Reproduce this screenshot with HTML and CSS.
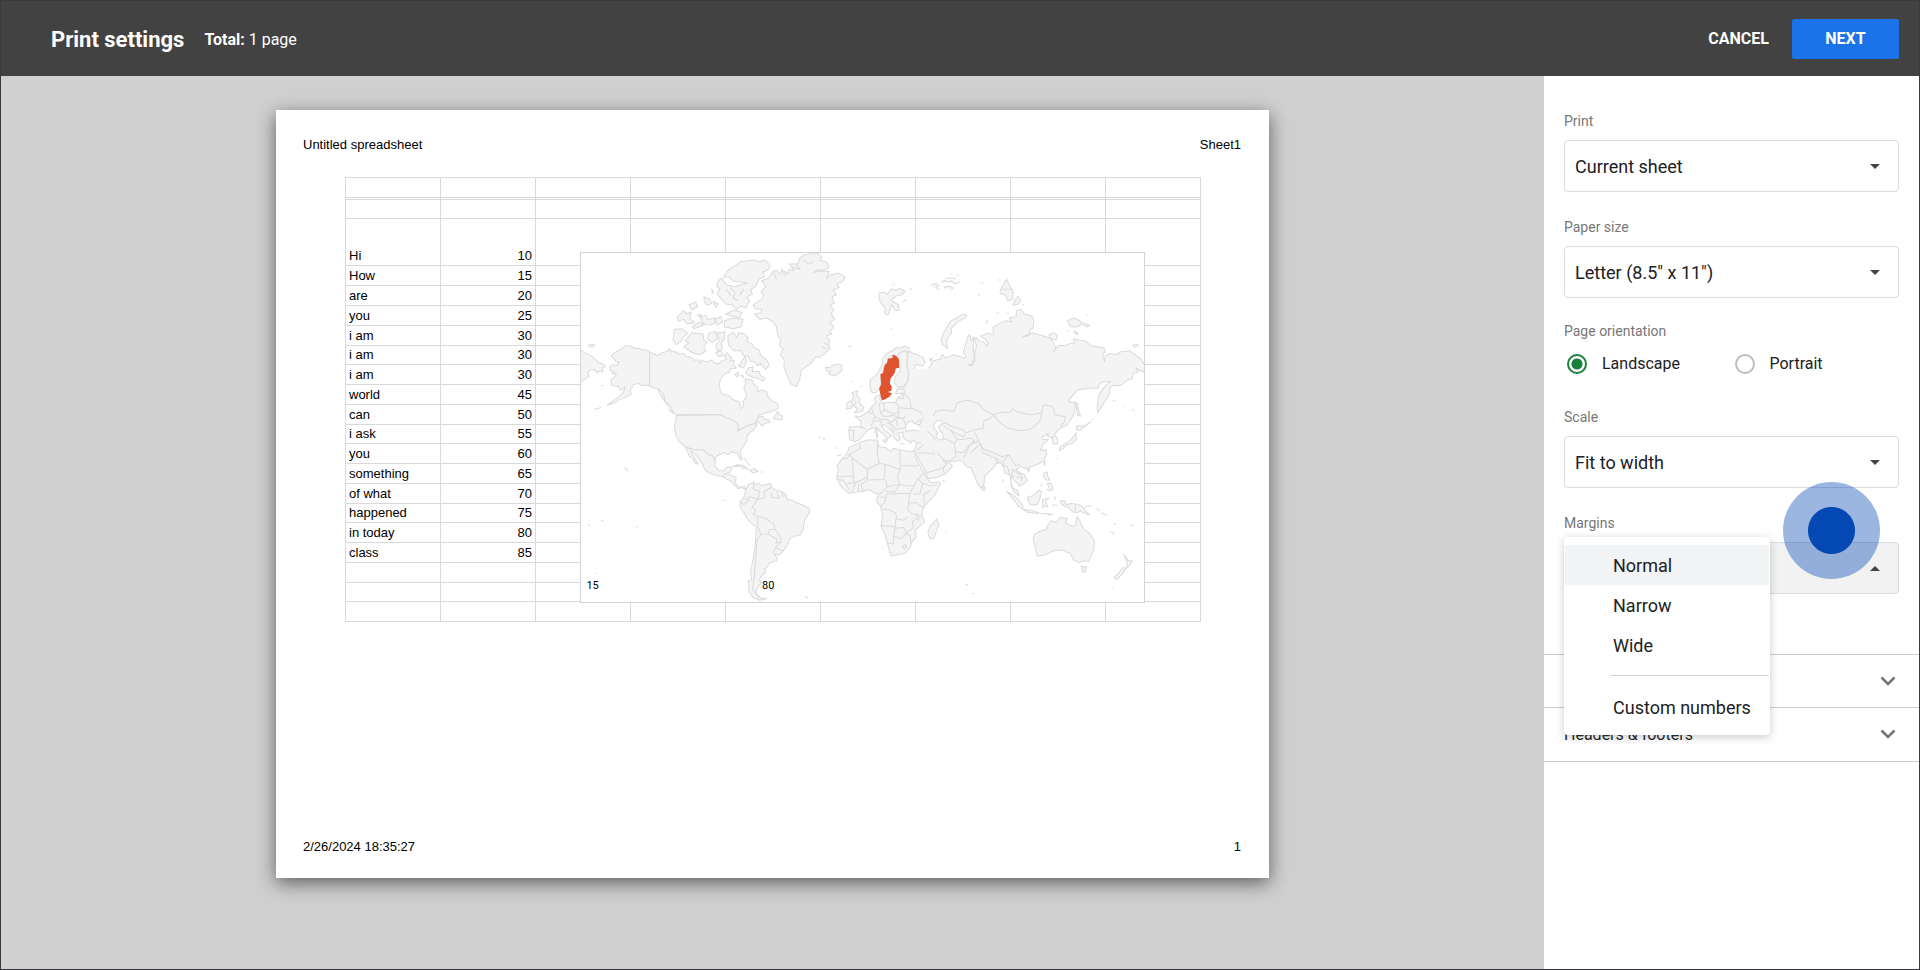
FILE: index.html
```html
<!DOCTYPE html>
<html lang="en">
<head>
<meta charset="utf-8">
<title>Print settings</title>
<link rel="stylesheet" href="styles.css">
</head>
<body>
<div class="app">
  <header class="topbar">
    <h1 class="topbar-title">Print settings</h1>
    <p class="topbar-total"><b>Total:</b> 1 page</p>
    <button class="btn btn-text" type="button">CANCEL</button>
    <button class="btn btn-primary" type="button">NEXT</button>
  </header>
  <div class="body">
    <main class="preview">
      <article class="sheet">
        <div class="sheet-line"><span>Untitled spreadsheet</span><span>Sheet1</span></div>
        <div class="grid-wrap">
          <table class="grid">
            <tbody>
              <tr><td></td><td></td><td></td><td></td><td></td><td></td><td></td><td></td><td></td></tr>
              <tr class="frozen"><td></td><td></td><td></td><td></td><td></td><td></td><td></td><td></td><td></td></tr>
              <tr class="short"><td></td><td></td><td></td><td></td><td></td><td></td><td></td><td></td><td></td></tr>
              <tr class="tall"><td>Hi</td><td>10</td><td></td><td></td><td></td><td></td><td></td><td></td><td></td></tr>
              <tr><td>How</td><td>15</td><td></td><td></td><td></td><td></td><td></td><td></td><td></td></tr>
              <tr><td>are</td><td>20</td><td></td><td></td><td></td><td></td><td></td><td></td><td></td></tr>
              <tr><td>you</td><td>25</td><td></td><td></td><td></td><td></td><td></td><td></td><td></td></tr>
              <tr><td>i am</td><td>30</td><td></td><td></td><td></td><td></td><td></td><td></td><td></td></tr>
              <tr class="short"><td>i am</td><td>30</td><td></td><td></td><td></td><td></td><td></td><td></td><td></td></tr>
              <tr><td>i am</td><td>30</td><td></td><td></td><td></td><td></td><td></td><td></td><td></td></tr>
              <tr><td>world</td><td>45</td><td></td><td></td><td></td><td></td><td></td><td></td><td></td></tr>
              <tr><td>can</td><td>50</td><td></td><td></td><td></td><td></td><td></td><td></td><td></td></tr>
              <tr class="short"><td>i ask</td><td>55</td><td></td><td></td><td></td><td></td><td></td><td></td><td></td></tr>
              <tr><td>you</td><td>60</td><td></td><td></td><td></td><td></td><td></td><td></td><td></td></tr>
              <tr><td>something</td><td>65</td><td></td><td></td><td></td><td></td><td></td><td></td><td></td></tr>
              <tr><td>of what</td><td>70</td><td></td><td></td><td></td><td></td><td></td><td></td><td></td></tr>
              <tr class="short"><td>happened</td><td>75</td><td></td><td></td><td></td><td></td><td></td><td></td><td></td></tr>
              <tr><td>in today</td><td>80</td><td></td><td></td><td></td><td></td><td></td><td></td><td></td></tr>
              <tr><td>class</td><td>85</td><td></td><td></td><td></td><td></td><td></td><td></td><td></td></tr>
              <tr><td></td><td></td><td></td><td></td><td></td><td></td><td></td><td></td><td></td></tr>
              <tr class="short"><td></td><td></td><td></td><td></td><td></td><td></td><td></td><td></td><td></td></tr>
              <tr><td></td><td></td><td></td><td></td><td></td><td></td><td></td><td></td><td></td></tr>
            </tbody>
          </table>
          <figure class="geo">
            <svg class="geo-map" viewBox="32 41 1688 1046" role="img" aria-label="World map">
              <!-- Americas, Greenland, Iceland -->
              <g class="land">
                <path d="M30 333L48 342L60 348L72 358L85 370L98 374L106 380L96 386L99 398L88 394L80 400L72 390L60 392L52 400L57 412L42 420L30 428"/>
                <path d="M238 338L226 330L215 332L205 326L195 328L185 322L168 318L158 324L150 330L138 337L122 350L130 356L136 366L146 368L140 378L128 376L118 384L120 394L132 396L124 402L138 404L132 416L122 420L124 438L136 440L144 442L150 452L158 448L164 442L160 458L148 470L132 482L112 496L130 492L150 480L165 474L182 464L180 450L190 435L205 432L215 440L228 437L238 440Z"/>
                <path d="M238 338L250 344L262 349L275 340L290 336L298 328L302 338L312 336L326 344L338 342L350 352L362 354L370 362L386 362L388 372L394 362L408 368L425 362L432 370L442 374L452 366L470 358L462 350L470 340L484 356L478 366L492 362L490 376L498 386L480 388L478 398L462 404L450 420L446 438L450 452L455 464L475 468L484 478L495 484L506 486L512 508L520 500L518 486L526 476L528 462L520 448L526 432L524 418L545 422L552 436L562 444L560 456L575 452L588 456L592 470L605 485L618 492L624 498L622 508L605 516L580 522L566 528L558 544L555 552L528 560L502 574L504 562L498 550L482 540L470 536L450 526L318 526L306 515L292 500L285 488L280 470L262 448L250 446L238 440Z"/>
                <path d="M556 550L562 534L578 530L582 540L592 540L600 548L584 552L574 560L568 550ZM608 538L622 516L626 526L636 530L634 542L620 540Z"/>
                <path d="M318 528L450 526L470 536L482 540L498 550L504 562L502 574L528 560L555 552L560 558L548 572L536 582L530 590L530 604L518 622L508 636L516 658L510 660L500 640L480 638L474 646L462 640L446 646L438 650L434 662L425 648L415 646L400 632L375 632L345 622L325 605L316 585L312 560L316 545Z"/>
                <path d="M345 624L375 632L400 632L415 646L425 648L434 662L434 680L446 694L462 694L468 684L484 682L480 698L470 700L462 712L446 710L432 706L408 696L400 684L395 672L380 650L362 634L364 644L376 660L384 674L376 672L366 656L356 650L352 638Z"/>
                <path d="M458 712L462 704L474 704L498 714L494 728L500 738L512 744L522 740L526 750L514 744L504 748L492 738L482 724L470 720Z"/>
                <path d="M488 682L500 676L520 678L534 690L524 686L510 680ZM538 692L552 688L564 696L546 700ZM572 698l8 0M512 688l8 0M520 656l8 6M526 664l14 16"/>
                <path d="M526 750L535 735L550 728L556 736L564 732L575 738L600 732L604 744L616 752L632 756L646 764L650 780L664 782L680 790L700 798L716 806L718 818L702 842L698 870L690 886L672 890L658 898L652 915L638 935L628 946L612 944L620 955L618 964L594 972L592 982L580 990L586 996L574 1010L566 1020L572 1030L560 1045L556 1062L572 1076L588 1078L568 1082L548 1074L536 1056L534 1026L544 1018L540 1000L548 960L555 910L558 862L535 845L524 826L508 800L512 785L522 770Z"/>
                <path class="line" d="M550 730L548 748L568 756L562 780L538 772L524 782M562 780L545 804L556 812L548 824L562 830L562 862L572 884L592 884L598 870L614 870L610 854L588 838L562 830M562 780L584 774L580 756L602 744M602 760L604 774L632 776M620 756l4 18M634 758l4 16M572 884L560 900L556 960L552 1010L546 1050L570 1076M592 884L622 900L616 912L632 906L630 892L614 870M632 906L612 930L610 942M614 924L638 935M508 784L520 796L538 780"/>
                <path d="M700 48L722 42L742 42L754 54L748 62L770 70L776 84L760 92L742 92L730 100L746 96L776 96L768 118L782 106L800 102L812 104L824 114L814 128L798 134L806 144L788 152L798 166L784 172L792 190L778 198L790 210L782 224L792 240L778 250L790 262L778 276L784 284L768 290L778 304L774 316L778 326L762 344L746 354L736 352L722 372L704 384L692 394L688 420L678 442L662 434L648 405L640 380L642 362L630 346L638 330L628 318L632 300L622 290L618 262L608 248L590 236L568 240L552 224L572 220L574 210L556 208L548 198L562 186L574 180L580 168L572 156L586 142L574 124L596 116L606 98L618 92L628 106L634 90L652 104L656 90L672 94L656 74L682 74L688 56Z"/>
                <path class="line" d="M610 100l8 20M632 94l14 16M664 84l26 6l-14-14M700 60l12 14l16-6M760 310l10 6M754 322l12 6"/>
                <path d="M765 384L778 384L784 380L800 374L812 376L815 392L806 400L792 410L774 404L780 396L768 394Z"/>
                <path d="M460 112L470 96L484 84L500 76L512 66L534 64L552 62L566 68L584 62L600 80L592 92L578 98L582 112L566 120L556 140L540 152L546 164L528 174L538 184L526 206L512 200L500 210L484 196L466 194L452 178L440 164L448 150L438 138L446 122L456 116L462 130L474 138L492 142L512 136L530 132L508 128L490 126L476 114Z"/>
                <path d="M480 146L494 160L488 176L504 184M520 150L508 168M468 150L482 170"/>
                <path d="M400 172L416 178L424 192L410 198L402 188ZM428 186L444 194L436 204ZM424 150l6 8l-4 4ZM356 196L376 188L382 202L364 212ZM320 236L338 214L352 224L362 218L358 236L372 250L350 254L340 240L326 246ZM366 262L388 248L402 256L386 262L370 268ZM388 232L406 228L412 240L432 236L434 250L418 258L398 252ZM434 238L452 232L456 248L440 258ZM462 244L490 236L518 240L512 262L488 268L462 262ZM466 224L492 212L516 220L508 234L484 230ZM380 228l10-4l4 8Z"/>
                <path d="M312 270L335 268L352 282L340 292L332 306L318 316L308 302Z"/>
                <path d="M350 296L366 280L398 284L400 300L410 308L400 322L406 336L386 346L366 340L340 322L356 310L344 304Z"/>
                <path d="M414 282L436 276L440 298L426 310L412 300ZM442 280L464 278L462 300L452 310L456 330L440 334L436 316L446 304ZM436 340l14-6l10 12l-14 6Z"/>
                <path d="M472 288L490 280L498 294L504 280L522 284L534 296L528 306L544 312L552 326L566 332L572 350L586 358L597 376L586 390L570 372L562 380L552 366L540 366L532 350L520 348L512 334L490 334L474 316Z"/>
                <path d="M526 402L534 386L548 382L546 396L566 396L570 408L584 416L578 426L560 416L542 412ZM494 404l10-6l2 10l-8 4ZM512 408l6 0l0 8ZM504 380l10-14l10-16l4 16l-8 20Z"/>
                <path d="M54 318l14-4l6 4l-10 6ZM72 510l20-6M110 498l14-6M92 438l6 0M162 686l6 2l6 8M262 448l16 14l8 28l-12-16ZM290 490l12 12l6 20l-14-12M458 782l6 2M52 856l8 2M92 844l8 0M196 862l6 0M744 594l6 2M758 598l6 0M702 1070l10 6M600 1054l12-4M76 1000l4 2M836 322l6-2"/>
              </g>
              <!-- Europe and Africa -->
              <g class="land" transform="translate(630 0)">
                <path d="M540 352L520 346L496 356L485 345L480 358L462 364L447 358L455 372L444 386L436 398L412 402L400 388L406 376L426 380L434 368L428 354L410 346L395 340L384 334L382 350L378 375L384 400L382 425L372 442L350 448L345 462L368 462L350 478L345 490L320 488L304 492L298 478L302 466L286 470L282 480L286 492L274 502L262 518L248 526L240 532L224 530L240 545L242 562L206 562L205 580L208 600L222 606L236 602L250 586L262 572L278 566L288 564L298 576L316 590L318 600L328 592L334 588L312 572L302 556L312 556L330 572L338 580L342 596L352 606L360 596L352 582L368 578L366 590L374 600L388 606L402 604L408 612L402 632L412 655L432 690L442 718L470 714L496 702L516 680L505 668L492 668L475 640"/>
                <path d="M385 325L372 320L360 326L348 324L336 334L322 340L306 358L306 372L296 395L284 410L270 420L268 440L272 458L286 460L296 448L302 435L300 405L308 400L312 375L320 370L322 358L336 348L350 352L360 338L372 335L385 340Z"/>
                <path d="M350 350L362 338L375 335L382 350L378 375L384 400L382 425L370 440L350 442L342 430L344 412L358 395L358 380L355 360Z"/>
                <path class="line" d="M350 462L372 462L388 480L392 505L425 520L428 535L418 550M352 448L372 450L368 478L350 476M345 490L355 500L352 518L340 524L312 512L310 492M355 505L392 508L388 480M312 512L300 522L312 532L340 528L350 534L358 518M274 502L276 520L284 532L278 545L272 560M240 562L256 568M284 532L300 540L320 540L330 550L345 538L366 536L376 556M278 545L300 545L304 556M318 550L336 556L345 570L372 566M330 560L340 576M345 538L352 560M350 534L370 536L374 530M206 572L220 574L218 600M262 515L274 524M300 520L296 490M440 570L450 578L444 600L462 640M440 578L430 574M408 612L430 606L444 602M410 632L428 616L430 606M412 640L430 640L462 644M438 700L460 694L488 686L490 700M488 686L500 668M450 572L468 578L460 588"/>
                <path class="sea" d="M374 562L382 548L396 544L400 554L420 548L414 558L432 570L444 578L420 576L400 572L378 576Z"/>
                <path class="sea" d="M404 552l14-8l6 4l-10 8Z"/>
                <path d="M214 460L232 455L228 468L238 476L236 490L250 504L244 516L222 520L232 508L220 500L226 490L216 480L220 470ZM200 490L212 484L218 496L212 506L198 510ZM284 568l6 0l0 10l-6 2ZM286 584l6 0l-2 12ZM306 602l14 0l-4 8ZM358 612l14 2M386 612l8-2M324 462l10-2l-4 12Z"/>
                <path d="M240 608L262 602L290 602L296 622L315 625L330 636L340 626L358 632L392 636L402 634L404 652L424 690L438 714L450 730L476 728L480 734L462 768L440 790L428 806L424 824L432 848L404 872L408 892L394 908L390 924L372 942L348 946L334 950L328 940L315 890L302 860L306 825L300 800L288 785L294 765L280 760L266 750L248 756L228 758L206 762L184 744L168 715L174 690L170 680L182 662L200 642L206 624L228 614Z"/>
                <path class="line" d="M236 612L240 626L206 646L200 658L184 658M206 646L216 656L260 690L296 672L290 640L292 604M216 656L218 710L172 712M218 710L222 730L200 732M168 718L190 724L206 750M260 690L262 712L226 730L214 758M262 712L258 724L242 734L246 756M234 732L234 756M262 722L310 720L314 698L312 674L296 672M312 674L360 690L358 634M358 678L412 680M360 690L350 712L358 734L320 742L316 720M320 742L304 760L292 766M358 734L370 738L400 740L412 718L430 700M318 756L342 758L358 736M400 740L388 762L360 762L318 764M412 718L426 732L418 764L400 764M426 732L452 740L470 736M452 752L430 764L432 796M388 762L384 790L408 790L430 806M384 790L382 812L396 824L424 830M308 808L326 812L346 820L348 838L370 842L382 832M300 858L344 862L346 838M344 862L340 890L338 914L320 910M340 890L362 898L378 880L370 864L344 866M378 880L398 866L396 846L412 836M378 880L390 890L390 910M368 920l8-4l2 8l-8 2ZM318 764L312 790L300 800M300 772L318 776M408 820L416 844"/>
                <path d="M468 838L475 855L466 880L460 896L448 898L442 880L450 858L460 850Z"/>
                <path d="M296 162L312 158L320 166L332 148L346 154L356 146L374 156L364 166L346 170L332 184L354 196L356 212L346 214L334 196L328 212L322 228L312 222L314 206L302 192L296 178Z"/>
                <path d="M366 186l12-4M388 150l8-2M336 136l6 0M330 268l4 0M204 322l6 0M240 438l4 4M212 424l4 4M450 138l14-6l12 6l-10 6l10 8M484 130l8-8l10 6l12-4l8 10l18-6M490 146l12-6l16 6l-6 6M508 104l6 0M528 108l6-2M496 116l30 2"/>
                <path d="M558 226L544 226L528 236L510 246L500 262L490 280L482 302L486 316L502 328L498 312L500 298L512 284L514 264L534 246L556 234Z"/>
                <path d="M556 1036l6 0M576 1062l4 0M76 1072l8 4M118 594l4 0M128 598l6 0M166 626l6 0M170 648l14-2M486 726l6-2M496 878l2 2M592 166l4 0"/>
                <path class="sweden" d="M336 346L345 348L355 358L356 385L346 387L342 402L330 418L328 432L334 442L333 454L322 458L334 462L324 474L312 480L304 483L299 462L296 448L302 435L300 405L308 400L312 378L320 370L322 358L336 356Z"/>
              </g>
              <!-- Asia and Oceania -->
              <g class="land" transform="translate(1080 0)">
                <path class="fill" d="M-60 390L90 380L90 640L20 640L-45 600L-20 540Z"/>
                <path d="M90 352L100 356L106 350L98 338L104 318L112 292L118 286L122 304L130 292L128 326L132 350L124 376L112 376L122 380L134 362L132 340L138 320L132 300L136 294L146 306L160 308L170 320L174 312L164 300L150 290L170 282L188 284L188 264L206 252L228 244L244 248L236 236L256 232L258 214L270 210L282 224L304 230L310 246L306 268L300 268L296 284L274 294L290 290L304 280L318 284L338 290L358 296L366 306L376 326L368 336L384 318L404 318L420 312L430 314L430 298L446 302L466 306L482 320L500 322L520 324L524 338L516 344L522 366L524 350L536 342L560 346L568 338L596 334L612 344L630 358L642 376L642 398L628 394L616 386L622 398L606 402L606 418L590 422L570 438L545 438L538 446L535 468L520 490L502 520L500 500L505 465L520 444L540 426L520 428L508 432L500 448L480 446L440 452L425 470L412 486L432 490L434 505L430 525L410 556L390 566L382 572L372 586L382 600L380 614L368 614L364 594L350 590L354 582L334 592L336 600L354 600L336 616L330 634L346 630L348 646L338 665L318 676L300 682L285 688L270 680L258 690L268 700L282 706L290 724L268 740L262 732L250 722L244 706L240 730L248 746L262 754L266 770L254 762L242 740L238 706L224 702L218 680L210 670L196 672L190 684L162 710L160 738L150 746L140 730L122 685L108 682L98 668L86 662L74 666L50 664L40 662L20 640"/>
                <path class="line" d="M8 530L14 516L40 512L70 516L80 490L110 482L144 492L160 512L190 526L178 538L160 544L158 566L132 572L106 580L98 572L60 560L46 550L30 556M190 526L206 520L240 518L246 508L262 518L300 526L334 520L336 500L346 496L366 502L374 526L404 532L402 546L390 562M190 528L206 548L230 566L270 574L300 570L328 546L334 520M190 526L178 538M132 578L144 604L160 630L190 640L214 652L236 646L246 664L256 678L270 674M144 604L118 616L108 640L98 658M60 570L80 600L98 600L120 596L132 604L118 616M80 600L72 612L76 650L60 664M40 560L58 572L98 592L106 580M76 638L98 640L118 616M120 640L150 612L156 640L196 656L204 662M196 656L200 670L212 666M236 646L218 664L218 680L230 680L238 706M244 706L246 690L262 700L274 712M258 714L276 714L272 726M-10 576L8 590L14 604M30 600L44 598L72 612M362 598L370 590"/>
                <path class="sea" d="M8 556L20 544L36 544L34 554L24 560L28 574L36 580L38 600L24 602L16 590L22 580L12 568Z"/>
                <path d="M228 120L238 140L248 160L246 178L232 184L224 166L208 162L212 146ZM210 150L246 150M262 170L272 184L264 194L248 198L252 186ZM410 244L430 236L448 244L454 254L440 262L420 262ZM456 250l22 8l-8 4l-12-4M430 276l14 6l-6 4ZM468 228l6 0M276 196l6 2M204 122l6 0M152 130l6 0M142 166l6 0M166 254l6-12M198 220l6 0M228 222l6 0M606 318l10-4l8 4l-12 6ZM408 274l6 2M356 286l14-6l10 8l-4 14l-18-6ZM562 342l6 0"/>
                <path d="M434 488L442 492L442 508L450 530L440 526L438 508ZM436 562L446 558L462 562L482 546M436 562L440 574L450 572L458 562M436 580L438 600L426 612L410 616L398 626L386 634L388 622L412 608L420 602L430 590ZM376 656l4 2M546 482l8 4M576 500l4 0M604 512l6 0M484 540l4 0M340 668l4-4l-2 14ZM290 690l8-2l-4 8Z"/>
                <path d="M156 740L164 744L162 754L154 750ZM216 720l2 8M340 700L350 698L352 712L358 722L348 722L340 714ZM350 732l8-2l8 10l0 12l-10-6ZM328 742l8-10M346 750l16 4M290 774L308 768L326 752L334 758L328 776L320 796L298 796ZM228 756L246 766L262 778L278 800L276 810L262 798L246 776ZM278 810L300 812L326 820L318 822L290 818ZM330 822l38 2M352 828l10-6M336 780L356 776L344 784L352 802L342 798L336 806ZM372 770l4 12M364 796l16 2M388 784L402 784L408 796L420 792L440 794L460 804L464 814L478 826L462 822L448 814L440 820L428 818L412 804L394 796ZM434 792L434 818M464 802l20-4M496 806l12 8M512 820l18 8M548 852l8 2M540 876l10 8M598 860l12-4"/>
                <path d="M310 886L326 876L346 870L350 858L362 844L376 850L388 834L410 838L404 850L420 858L434 860L440 830L450 848L458 868L476 880L492 905L488 935L474 966L456 964L446 970L430 962L418 940L408 938L400 932L376 932L356 940L344 946L320 950L316 930L308 900ZM452 978L460 984L468 980L464 996L456 998Z"/>
                <path d="M580 946L588 956L592 964L606 964L598 976L588 986L590 970ZM578 984L586 988L574 1004L560 1020L550 1014L564 1000ZM546 1046l4 0M106 1036l6 0M126 1062l4 0M46 878l2 2M38 726l4-2M14 344l6 2M0 356l8-2"/>
              </g>
            </svg>
            <figcaption class="geo-legend"><span>15</span><span>80</span></figcaption>
          </figure>
        </div>
        <div class="sheet-line sheet-foot"><span>2/26/2024 18:35:27</span><span>1</span></div>
      </article>
    </main>

    <aside class="panel">
      <form class="options">
        <div class="field">
          <label class="label" for="range">Print</label>
          <div class="pick">
            <select id="range"><option>Current sheet</option></select>
            <svg class="caret" viewBox="0 0 10 5"><path d="M0 0h10L5 5z"/></svg>
          </div>
        </div>
        <div class="field">
          <label class="label" for="paper">Paper size</label>
          <div class="pick">
            <select id="paper"><option>Letter (8.5" x 11")</option></select>
            <svg class="caret" viewBox="0 0 10 5"><path d="M0 0h10L5 5z"/></svg>
          </div>
        </div>
        <fieldset class="orientation">
          <legend class="label">Page orientation</legend>
          <div class="radios">
            <label class="radio"><input type="radio" name="orient" checked>Landscape</label>
            <label class="radio"><input type="radio" name="orient">Portrait</label>
          </div>
        </fieldset>
        <div class="field">
          <label class="label" for="scale">Scale</label>
          <div class="pick">
            <select id="scale"><option>Fit to width</option></select>
            <svg class="caret" viewBox="0 0 10 5"><path d="M0 0h10L5 5z"/></svg>
          </div>
        </div>
        <div class="field margins">
          <label class="label" for="margins">Margins</label>
          <div class="pick open">
            <select id="margins"><option>Normal</option></select>
            <svg class="caret" viewBox="0 0 10 5"><path d="M0 5h10L5 0z"/></svg>
          </div>
          <div class="menu" role="listbox" aria-label="Margins">
            <button class="menu-item selected" type="button" role="option" aria-selected="true">Normal</button>
            <button class="menu-item" type="button" role="option">Narrow</button>
            <button class="menu-item" type="button" role="option">Wide</button>
            <hr class="menu-rule">
            <button class="menu-item" type="button" role="option">Custom numbers</button>
          </div>
          <span class="pointer"></span>
        </div>
        <a class="breaks" href="#">SET CUSTOM PAGE BREAKS</a>
      </form>
      <button class="section" type="button">Formatting
        <svg class="chevron" viewBox="0 0 16 10"><path d="M1.500 1.500L8 8l6.500-6.500"/></svg>
      </button>
      <button class="section" type="button">Headers &amp; footers
        <svg class="chevron" viewBox="0 0 16 10"><path d="M1.500 1.500L8 8l6.500-6.500"/></svg>
      </button>
    </aside>
  </div>
</div>
</body>
</html>
```
FILE: styles.css
```css
* { box-sizing: border-box; }

body {
  margin: 0;
  font-family: Roboto, "Liberation Sans", sans-serif;
  color: #202124;
}

.app {
  display: flex;
  flex-direction: column;
  min-height: 100vh;
  border: 1px solid #3a3a3c;
}

/* Top bar */
.topbar {
  display: flex;
  align-items: center;
  height: 75px;
  padding: 0 20px 0 50px;
  background: #424242;
  color: #fff;
}
.topbar-title { margin: 0 20px 0 0; padding-top: 2px; font-size: 22px; font-weight: 700; }
.topbar-total { flex: 1; margin: 0; padding-top: 2px; font-size: 16px; }
.topbar-total b { font-weight: 700; }
.btn {
  height: 40px;
  border: 0;
  border-radius: 2px;
  font: 700 16px Roboto, sans-serif;
  color: #fff;
}
.btn-text { background: none; padding: 0 23px; }
.btn-primary { width: 107px; background: #1a73e8; }

.body { display: flex; flex: 1; }

/* Preview */
.preview {
  display: flex;
  flex: 1;
  justify-content: center;
  align-items: flex-start;
  padding: 34px 40px;
  background: #d0d0d0;
}
.sheet {
  display: flex;
  flex-direction: column;
  width: 100%;
  max-width: 993px;
  aspect-ratio: 993 / 768;
  padding: 26px 0 23px;
  background: #fff;
  box-shadow: 0 5px 18px rgba(0, 0, 0, .55);
  font: 13px/17px "Liberation Sans", Arial, sans-serif;
  color: #000;
}
.sheet-line { display: flex; justify-content: space-between; padding: 0 28px 0 27px; }
.sheet-foot { margin-top: auto; }

.grid-wrap { position: relative; margin: 24px 68px 0 69px; }
.grid { width: 100%; table-layout: fixed; border-collapse: collapse; line-height: 15px; }
.grid tr { height: 20px; }
.grid tr.short { height: 19px; }
.grid tr.frozen { height: 2px; }
.grid tr.tall { height: 47px; }
.grid td { padding: 0 3px 2px; border: 1px solid #d9d9d9; vertical-align: bottom; }
.grid .frozen td { padding: 0; }
.grid td:nth-child(2) { text-align: right; }

.geo {
  position: absolute;
  top: 75px;
  left: 27.5%;
  width: 66%;
  margin: 0;
  border: 1px solid #d4d4d4;
  background: #fff;
}
.geo-map { display: block; width: 100%; overflow: hidden; }
.land path { fill: #f4f4f4; stroke: #dadada; stroke-width: 3; stroke-linejoin: round; }
.land .line { fill: none; }
.land .fill { stroke: none; }
.land .sea { fill: #fff; }
.land .sweden { fill: #e0532f; stroke: none; }
.geo-legend {
  position: absolute;
  left: 5px;
  bottom: 8px;
  display: flex;
  justify-content: space-between;
  width: 188px;
  font: 11px/16px Roboto, sans-serif;
}

/* Settings panel */
.panel { width: 375px; background: #fff; }
.options { padding: 36px 20px 0; }
.field { margin-bottom: 26px; }
.label { display: block; margin: 0 0 10px; padding: 0; font-size: 14px; line-height: 18px; color: #777; }
.pick { display: grid; align-items: center; }
.pick > * { grid-area: 1 / 1; }
.pick select {
  appearance: none;
  width: 100%;
  height: 52px;
  padding: 0 10px;
  border: 1px solid #dadce0;
  border-radius: 4px;
  background: #fff;
  font: 18px Roboto, sans-serif;
  color: #202124;
}
.pick.open select { background: #f2f2f2; }
.caret { justify-self: end; width: 10px; height: 5px; margin-right: 19px; fill: #444; pointer-events: none; }

.orientation { margin: -2px 0 32px; padding: 0; border: 0; }
.orientation .label { margin-bottom: 12px; }
.radios { display: grid; grid-template-columns: 1fr 1fr; }
.radio { display: flex; align-items: center; gap: 15px; padding-left: 3px; font-size: 16px; line-height: 24px; }
.radio input {
  appearance: none;
  width: 20px;
  height: 20px;
  margin: 0;
  border: 2px solid #bdbdbd;
  border-radius: 50%;
}
.radio input:checked { border-color: #188038; background: radial-gradient(circle, #188038 5px, transparent 6px); }

.margins { position: relative; margin-bottom: 16px; }
.menu {
  position: absolute;
  top: 23px;
  left: 0;
  width: 206px;
  padding: 8px 1px;
  border-radius: 4px;
  background: #fff;
  box-shadow: 0 2px 8px rgba(60, 64, 67, .28);
}
.menu-item {
  display: block;
  width: 100%;
  height: 40px;
  padding: 0 0 0 48px;
  border: 0;
  background: none;
  font: 18px Roboto, sans-serif;
  color: #202124;
  text-align: left;
}
.menu-item.selected { background: #f1f3f4; }
.menu-rule { height: 1px; margin: 10px 0 11px 45px; border: 0; background: #d0d0d0; }
.pointer {
  position: absolute;
  top: -32px;
  right: 19px;
  width: 97px;
  height: 97px;
  border-radius: 50%;
  background: radial-gradient(circle, #0448b3 23px, rgba(4, 72, 179, .4) 24px);
}

.breaks { display: block; padding-bottom: 20px; font-size: 16px; font-weight: 500; line-height: 24px; color: #00796b; text-decoration: none; white-space: nowrap; }

.section {
  display: flex;
  align-items: center;
  justify-content: space-between;
  width: 100%;
  height: 53px;
  padding: 0 23px 1px 20px;
  border: 0;
  border-top: 1px solid #ccc;
  background: none;
  font: 16px Roboto, sans-serif;
  color: #202124;
}
.section:last-child { height: 55px; border-bottom: 1px solid #ccc; }
.chevron { width: 16px; height: 10px; fill: none; stroke: #757575; stroke-width: 2.500; }
```
